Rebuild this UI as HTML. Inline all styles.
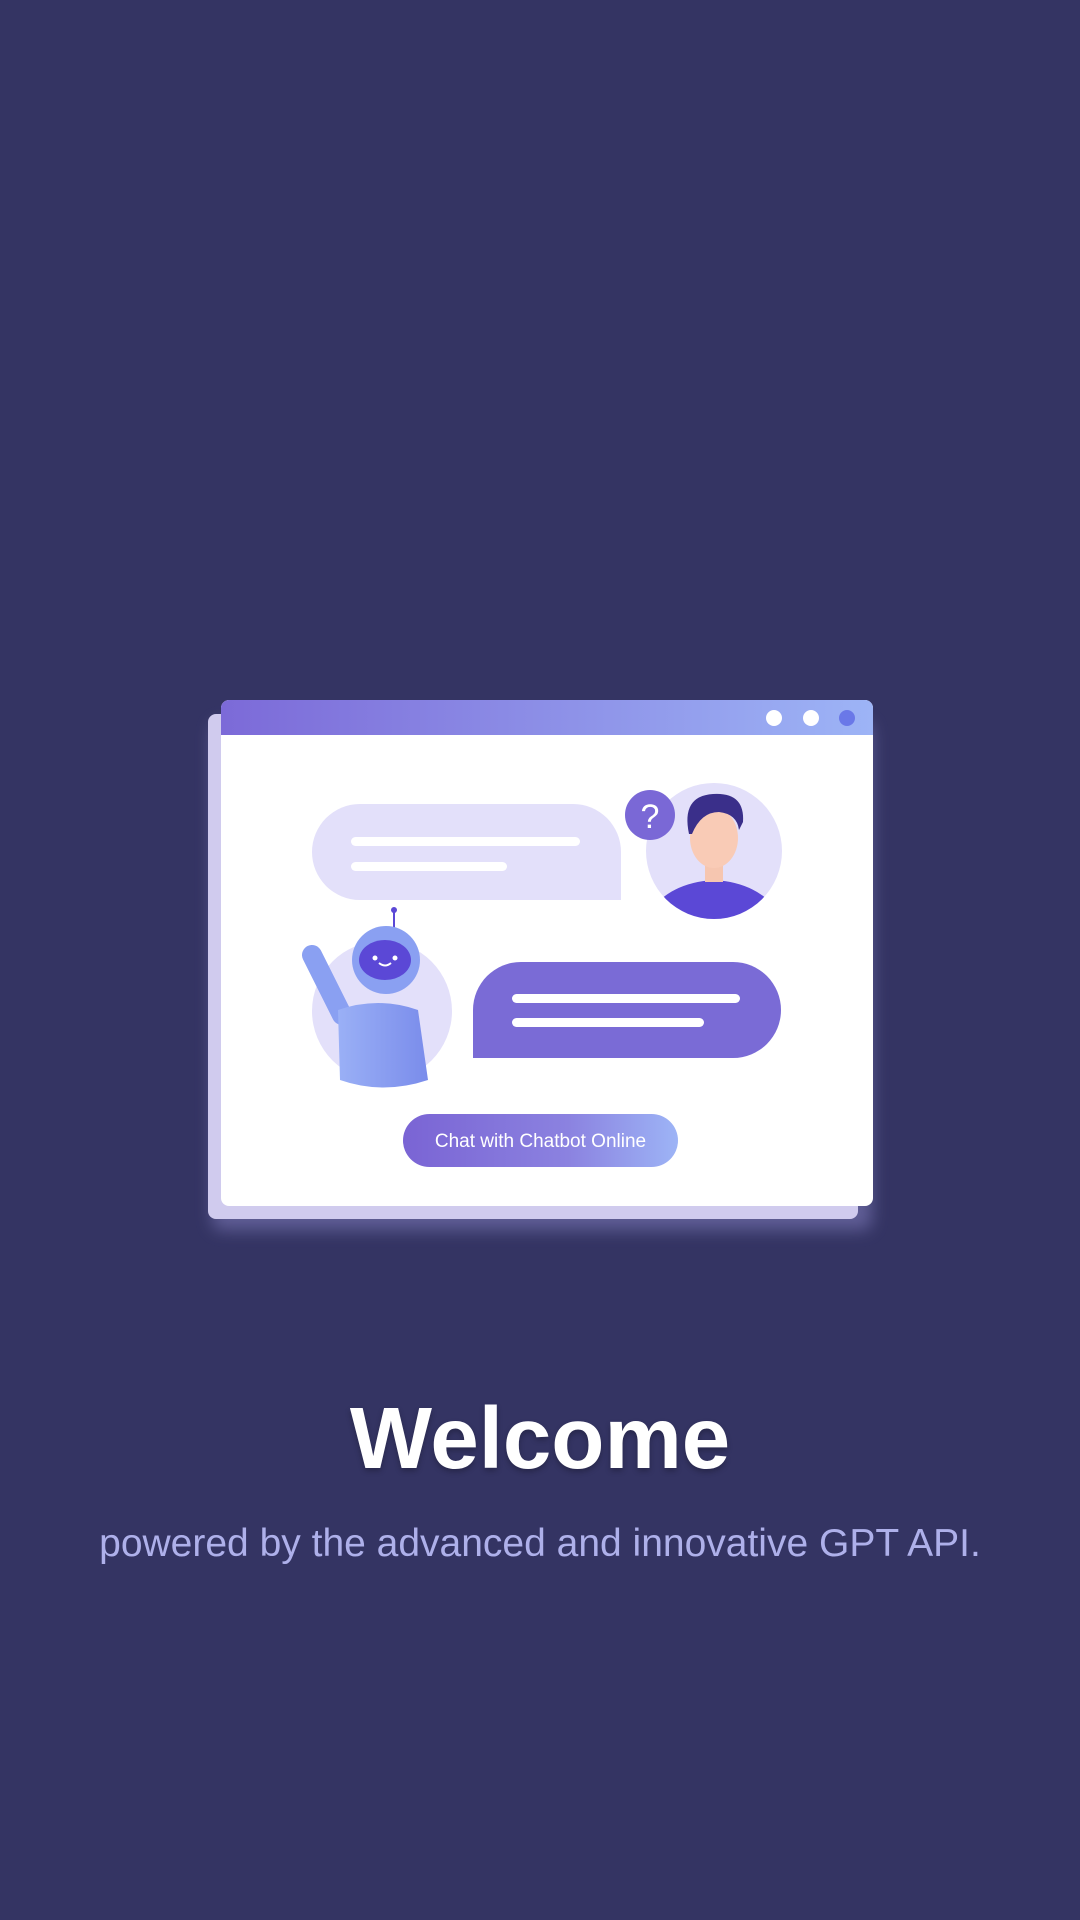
<!DOCTYPE html>
<html><head><meta charset="utf-8"><style>
html,body{margin:0;padding:0;width:1080px;height:1920px;background:#343463;overflow:hidden;font-family:"Liberation Sans",sans-serif}
.t{position:absolute;left:0;width:1080px;text-align:center}
</style></head><body>
<svg width="1080" height="1920" style="position:absolute;left:0;top:0">
<defs>
<linearGradient id="tb" x1="0" x2="1"><stop offset="0" stop-color="#7c6ad8"/><stop offset="1" stop-color="#9db4f6"/></linearGradient>
<linearGradient id="bt" x1="0" x2="1"><stop offset="0" stop-color="#7a64d4"/><stop offset="0.6" stop-color="#8b82e0"/><stop offset="1" stop-color="#9db4f6"/></linearGradient>
<linearGradient id="rb" x1="0" x2="1"><stop offset="0" stop-color="#9ab0f6"/><stop offset="1" stop-color="#7a8ceb"/></linearGradient>
<filter id="sh" x="-10%" y="-10%" width="120%" height="120%"><feGaussianBlur stdDeviation="8"/></filter>
<clipPath id="pc"><circle cx="714" cy="851" r="68"/></clipPath>
<clipPath id="rc"><path d="M300 900 H470 V1081 A70 70 0 0 1 312 1011 Z"/><circle cx="382" cy="1011" r="70"/></clipPath>
</defs>
<rect x="212" y="722" width="660" height="508" rx="10" fill="#8a86c8" opacity="0.5" filter="url(#sh)"/>
<rect x="208" y="714" width="650" height="505" rx="8" fill="#d0cbee"/>
<rect x="221" y="700" width="652" height="506" rx="8" fill="#fff"/>
<path d="M221 735 V708 a8 8 0 0 1 8-8 H865 a8 8 0 0 1 8 8 V735 Z" fill="url(#tb)"/>
<circle cx="774" cy="718" r="8" fill="#fff"/><circle cx="811" cy="718" r="8" fill="#fff"/><circle cx="847" cy="718" r="8" fill="#6a78e8"/>
<path d="M360 804 H573 a48 48 0 0 1 48 48 V900 H360 a48 48 0 0 1 0-96Z" fill="#e3e0fa"/>
<rect x="351" y="837" width="229" height="9" rx="4.5" fill="#fff"/>
<rect x="351" y="862" width="156" height="9" rx="4.5" fill="#fff"/>
<circle cx="714" cy="851" r="68" fill="#e3e0fa"/>
<g clip-path="url(#pc)">
<path d="M660 960 V900 q20-18 54-20 q34 2 54 20 V960Z" fill="#5b48d6"/>
<rect x="705" y="860" width="18" height="22" fill="#f6c6b0"/>
<ellipse cx="714" cy="838" rx="24" ry="30" fill="#f9cbb6"/>
<path d="M689 834 q-8-38 24-40 q32-2 30 28 l-4 8 q-2-16 -20-18 q-18 0 -27 22Z" fill="#3a2f8a"/>
</g>
<circle cx="650" cy="815" r="25" fill="#7a68d6"/>
<text x="650" y="828" font-size="34" fill="#fff" text-anchor="middle">?</text>
<circle cx="382" cy="1011" r="70" fill="#e3e0fa"/>
<path d="M312 955 l30 60" stroke="#8aa0f2" stroke-width="20" stroke-linecap="round"/>
<g clip-path="url(#pc2)">
<path d="M338 1010 q40-14 80 0 l10 70 q-45 15 -88 0Z" fill="url(#rb)"/>
</g>
<line x1="394" y1="932" x2="394" y2="912" stroke="#5b48d6" stroke-width="2"/><circle cx="394" cy="910" r="3" fill="#5b48d6"/>
<circle cx="386" cy="960" r="34" fill="#8aa0f2"/>
<ellipse cx="385" cy="960" rx="26" ry="20" fill="#5b48d6"/>
<circle cx="375" cy="958" r="2.5" fill="#fff"/><circle cx="395" cy="958" r="2.5" fill="#fff"/>
<path d="M379 963 q6 5 12 0" stroke="#fff" stroke-width="2" fill="none"/>
<path d="M473 1058 V1010 a48 48 0 0 1 48-48 H733 a48 48 0 0 1 0 96Z" fill="#7a6bd6"/>
<rect x="512" y="994" width="228" height="9" rx="4.5" fill="#fff"/>
<rect x="512" y="1018" width="192" height="9" rx="4.5" fill="#fff"/>
<rect x="403" y="1114" width="275" height="53" rx="26.5" fill="url(#bt)"/>
<text x="540.5" y="1147" font-size="19" fill="#fff" text-anchor="middle" font-family="Liberation Sans, sans-serif">Chat with Chatbot Online</text>
</svg>
<div class="t" style="top:1386px;font-size:87px;font-weight:bold;color:#fff;line-height:106px;text-shadow:0 3px 6px rgba(0,0,0,0.25)">Welcome</div>
<div class="t" style="top:1522px;font-size:39px;color:#aeb0ea;line-height:44px">powered by the advanced and innovative GPT API.</div>
</body></html>
